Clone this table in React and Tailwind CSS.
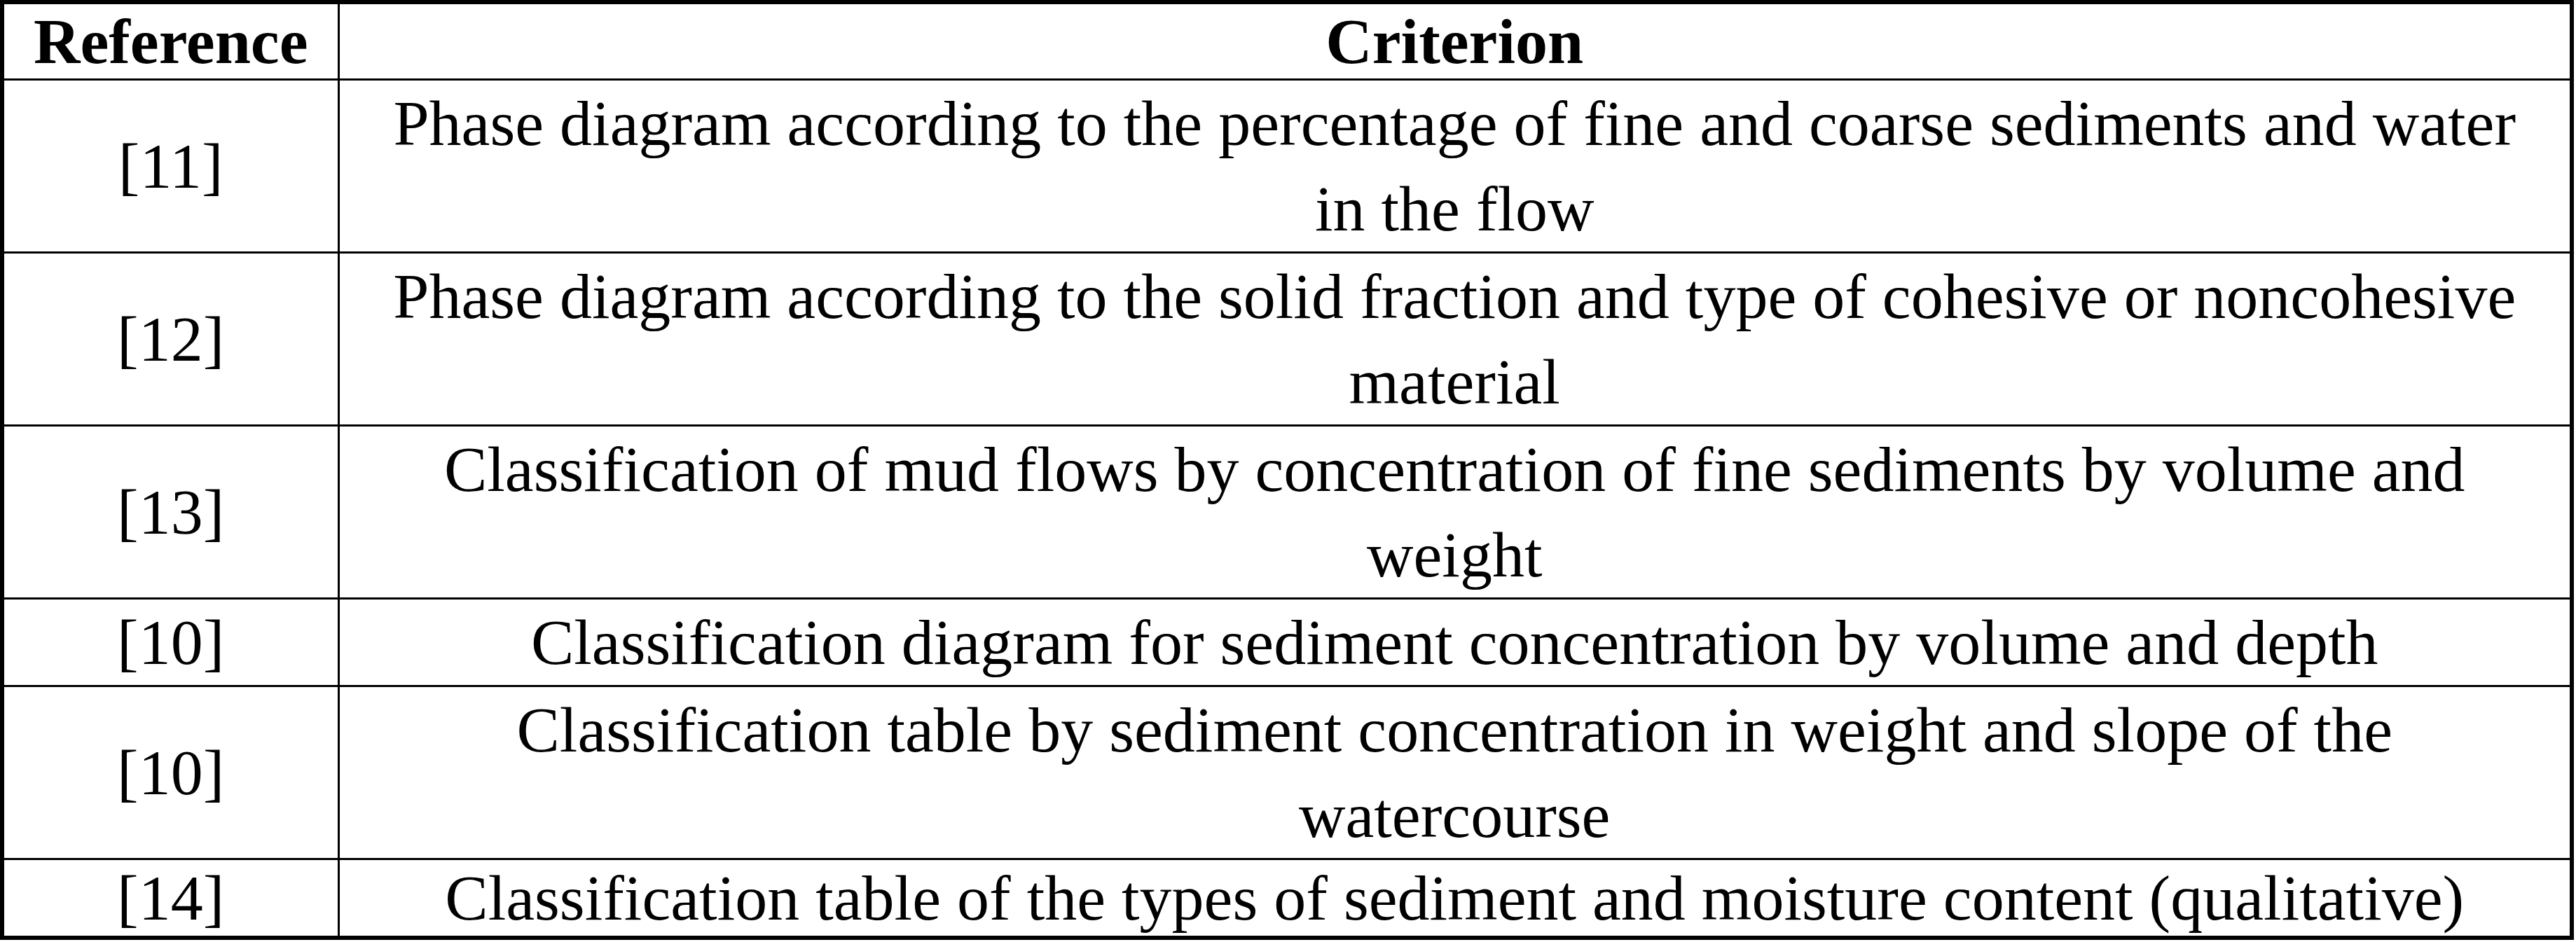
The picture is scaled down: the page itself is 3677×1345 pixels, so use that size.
import React from "react";

const rows = [
  { ref: "[11]", lines: ["Phase diagram according to the percentage of fine and coarse sediments and water", "in the flow"] },
  { ref: "[12]", lines: ["Phase diagram according to the solid fraction and type of cohesive or noncohesive", "material"] },
  { ref: "[13]", lines: ["Classification of mud flows by concentration of fine sediments by volume and", "weight"] },
  { ref: "[10]", lines: ["Classification diagram for sediment concentration by volume and depth"] },
  { ref: "[10]", lines: ["Classification table by sediment concentration in weight and slope of the", "watercourse"] },
  { ref: "[14]", lines: ["Classification table of the types of sediment and moisture content (qualitative)"], last: true },
];

export default function App() {
  return (
    <div className="w-[3677px] h-[1345px] bg-white text-black font-['Liberation_Serif','Times_New_Roman',serif]">
      <table className="w-[3674px] table-fixed border-collapse border-[6px] border-black text-[92px] leading-[122px]">
        <colgroup>
          <col className="w-[480px]" />
          <col />
        </colgroup>
        <thead>
          <tr>
            <th className="border-[3px] border-black p-0 text-center align-middle font-bold leading-[106px]">Reference</th>
            <th className="border-[3px] border-black p-0 text-center align-middle font-bold leading-[106px]">Criterion</th>
          </tr>
        </thead>
        <tbody>
          {rows.map((r, i) => (
            <tr key={i} className={r.last ? "leading-[108px]" : ""}>
              <td className="border-[3px] border-black p-0 text-center align-middle">{r.ref}</td>
              <td className="border-[3px] border-black py-0 px-4 text-center align-middle">
                {r.lines.map((l, j) => (
                  <React.Fragment key={j}>
                    {j > 0 && <br />}
                    {l}
                  </React.Fragment>
                ))}
              </td>
            </tr>
          ))}
        </tbody>
      </table>
    </div>
  );
}
